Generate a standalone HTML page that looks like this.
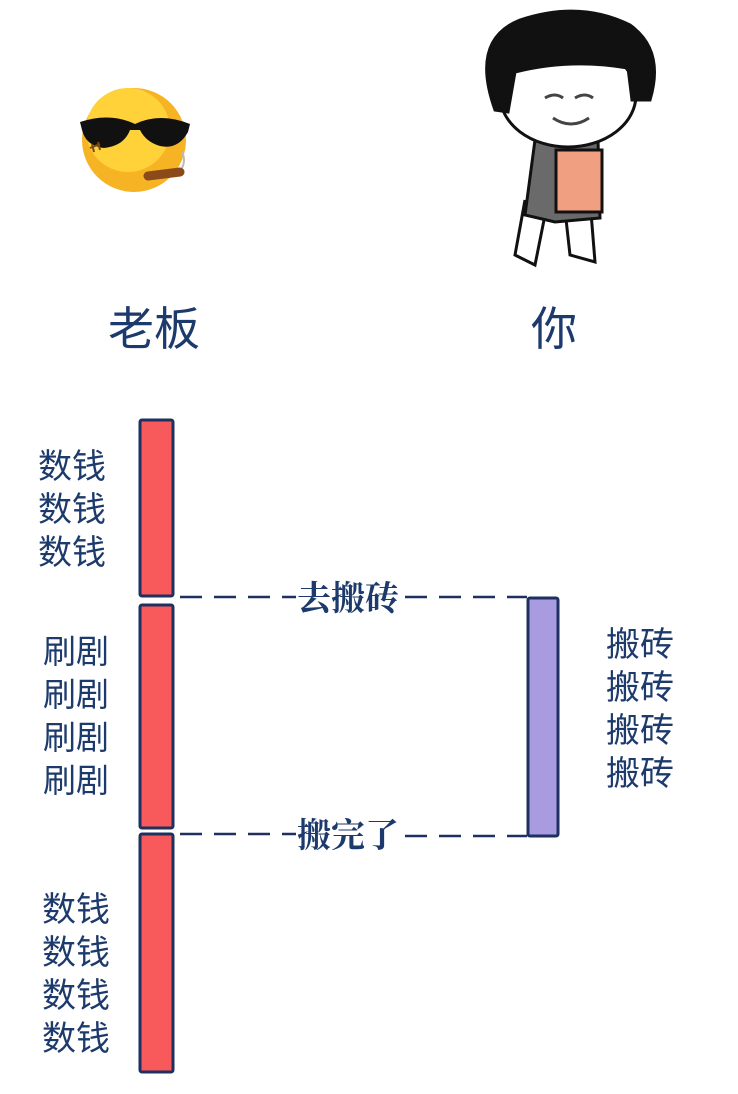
<!DOCTYPE html>
<html><head><meta charset="utf-8"><style>
html,body{margin:0;padding:0;background:#fff;width:738px;height:1094px;overflow:hidden}
svg{display:block}
text{font-family:"Liberation Sans","Noto Sans CJK SC",sans-serif;fill:#1d3a6c}
</style></head><body>
<svg width="738" height="1094" viewBox="0 0 738 1094">
<!-- sunglasses emoji -->
<g>
<circle cx="134" cy="140" r="52" fill="#f6b425"/>
<circle cx="128" cy="130" r="42" fill="#ffd23a"/>
<path d="M80 122 Q110 112 135 124 Q160 112 190 124 L188 132 Q178 150 160 146 Q146 142 140 130 L130 130 Q124 146 104 148 Q86 146 82 130 Z" fill="#111"/>
<path d="M90 148 l10 -4 M94 152 l-2 -8 M100 150 l-2 -8" stroke="#7a4a10" stroke-width="2"/>
<path d="M148 176 L180 172" stroke="#8b4a1a" stroke-width="9" stroke-linecap="round"/>
<path d="M182 168 q4 -8 0 -16" stroke="#bbb" stroke-width="2" fill="none"/>
</g>
<!-- character -->
<g stroke="#111" stroke-width="3">
<path d="M525 200 L515 255 L535 265 L545 215 M565 210 L570 255 L595 262 L590 200" fill="#fff"/>
<path d="M535 140 L525 215 L555 222 L600 218 L598 140 Z" fill="#6a6a6a"/>
<rect x="556" y="150" width="46" height="62" fill="#f0a080"/>
<ellipse cx="568" cy="95" rx="68" ry="52" fill="#fff"/>
<path d="M495 110 Q470 40 520 20 Q580 0 630 25 Q665 50 650 100 L632 100 L628 68 Q570 58 515 72 L508 112 Z" fill="#111"/>
</g>
<path d="M545 98 q10 -6 18 0 M575 98 q10 -6 18 0 M553 118 q18 12 36 0" stroke="#444" stroke-width="3" fill="none"/>
<!-- titles -->
<text x="108" y="345" font-size="46">老板</text>
<text x="531" y="345" font-size="46">你</text>
<!-- bars -->
<g stroke="#1d3060" stroke-width="3" fill="#f85a5c">
<rect x="140" y="420" width="33" height="176" rx="2"/>
<rect x="140" y="605" width="33" height="223" rx="2"/>
<rect x="140" y="834" width="33" height="238" rx="2"/>
<rect x="528" y="598" width="30" height="238" rx="2" fill="#a99be0"/>
</g>
<g stroke="#1d3060" stroke-width="2.5" stroke-dasharray="22 12" fill="none">
<line x1="180" y1="597" x2="296" y2="597"/>
<line x1="405" y1="597" x2="527" y2="597"/>
<line x1="180" y1="834" x2="296" y2="834"/>
<line x1="405" y1="836" x2="527" y2="836"/>
</g>
<g font-size="34" font-weight="bold">
<text x="297" y="610" style="font-family:'Noto Serif CJK SC',serif">去搬砖</text>
<text x="297" y="847" style="font-family:'Noto Serif CJK SC',serif">搬完了</text>
</g>
<g font-size="34">
<text x="38" y="478">数钱</text><text x="38" y="521">数钱</text><text x="38" y="564">数钱</text>
<text x="43" y="663" font-size="33">刷剧</text><text x="43" y="706" font-size="33">刷剧</text><text x="43" y="749" font-size="33">刷剧</text><text x="43" y="792" font-size="33">刷剧</text>
<text x="42" y="921">数钱</text><text x="42" y="964">数钱</text><text x="42" y="1007">数钱</text><text x="42" y="1050">数钱</text>
<text x="606" y="656">搬砖</text><text x="606" y="699">搬砖</text><text x="606" y="742">搬砖</text><text x="606" y="785">搬砖</text>
</g>
</svg>
</body></html>
